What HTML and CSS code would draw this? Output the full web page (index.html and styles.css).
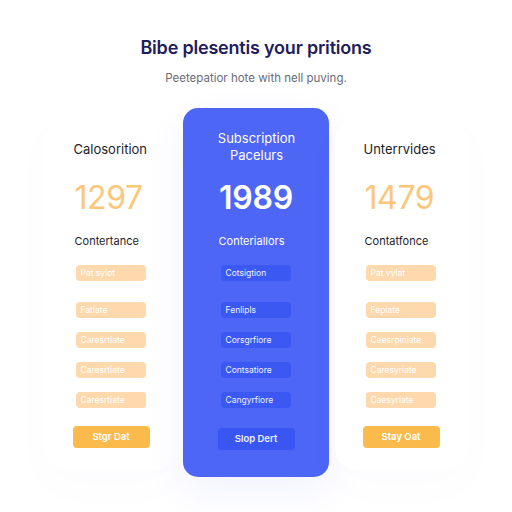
FILE: index.html
```html
<!DOCTYPE html>
<html>
<head>
<meta charset="utf-8">
<link rel="stylesheet" href="styles.css">
</head>
<body>
<div class="page">
  <h1 class="title">Bibe plesentis your pritions</h1>
  <p class="subtitle">Peetepatior hote with nell puving.</p>
  <div class="plans">
    <div class="plan side">
      <div class="inner">
        <div class="head">Calosorition</div>
        <div class="num">1297</div>
        <div class="label">Contertance</div>
        <div class="pill first">Pat sylot</div>
        <div class="pill">Fatlate</div>
        <div class="pill">Caresrtiate</div>
        <div class="pill">Caresrtiate</div>
        <div class="pill">Caresrtiate</div>
        <div class="btn">Stgr Dat</div>
      </div>
    </div>
    <div class="plan main">
      <div class="inner">
        <div class="head">Subscription<br>Pacelurs</div>
        <div class="num">1989</div>
        <div class="label">Conteriallors</div>
        <div class="pill first">Cotsigtion</div>
        <div class="pill">Fenlipls</div>
        <div class="pill">Corsgrfiore</div>
        <div class="pill">Contsatiore</div>
        <div class="pill">Cangyrfiore</div>
        <div class="btn">Slop Dert</div>
      </div>
    </div>
    <div class="plan side">
      <div class="inner">
        <div class="head">Unterrvides</div>
        <div class="num">1479</div>
        <div class="label">Contatfonce</div>
        <div class="pill first">Pat vylat</div>
        <div class="pill">Fepiate</div>
        <div class="pill">Ceesrpiniate</div>
        <div class="pill">Caresyriate</div>
        <div class="pill">Caesyriate</div>
        <div class="btn">Stay Oat</div>
      </div>
    </div>
  </div>
</div>
</body>
</html>
```

FILE: styles.css
```css
* { box-sizing: border-box; margin: 0; padding: 0; }
html, body { width: 512px; height: 512px; background: #ffffff; overflow: hidden; }
body { font-family: Inter, "Open Sans", sans-serif; }

.page { display: flex; flex-direction: column; align-items: center; padding-top: 37px; }

.title {
  font-size: 18px; font-weight: 600; color: #1f1c5c; line-height: 22px;
  letter-spacing: -0.2px;
}
.subtitle {
  margin-top: 12px; font-size: 11.5px; color: #6b6b78; line-height: 14px;
}

.plans {
  margin-top: 23px;
  display: grid;
  grid-template-columns: 132px 146px 132px;
  column-gap: 6px;
  align-items: stretch;
}

.plan { display: flex; flex-direction: column; align-items: center; }
.plan .inner { display: flex; flex-direction: column; width: 77px; }

.side {
  margin: 10px 0 7px;
  padding-top: 11px;
  background: #ffffff;
  border-radius: 22px;
  box-shadow: 0 14px 40px rgba(110, 120, 200, 0.025);
}
.main {
  padding-top: 21px; padding-bottom: 27px;
  background: #4e66f6;
  border-radius: 15px;
  box-shadow: 0 16px 40px rgba(70, 90, 230, 0.07);
}

.head {
  height: 35px; display: flex; align-items: center;
  font-size: 13px; color: #1d1d2b; line-height: 17px; padding: 6px 0 0 1px;
}
.main .head { justify-content: center; text-align: center; color: #ffffff; padding: 0; width: 146px; margin-left: -34px; }

.num {
  margin-top: 16px; height: 36px; line-height: 36px;
  font-size: 32px; font-weight: 400; color: #fcc77a; padding-left: 2px; letter-spacing: -0.4px;
}
.main .num { color: #ffffff; font-weight: 600; text-align: center; padding-left: 0; font-size: 32px; letter-spacing: -0.2px; }

.label {
  margin-top: 18px; height: 14px; line-height: 14px;
  font-size: 11px; color: #1d1d2b; padding-left: 2px;
}
.main .label { color: #ffffff; text-align: left; padding-left: 1px; }

.pill {
  margin: 14px 0 0 3px; width: 70px; height: 16px; line-height: 16px;
  border-radius: 4px; background: #fdd9ad; color: #ffffff;
  font-size: 8.5px; padding-left: 5px; white-space: nowrap; overflow: hidden;
}
.pill.first { margin-top: 17px; }
.pill.first + .pill { margin-top: 21px; }
.main .pill { background: #3b58f3; color: #eef0ff; }

.btn {
  margin-top: 18px; width: 77px; height: 22px; line-height: 22px;
  border-radius: 4px; background: #fbbb4c; color: #ffffff;
  font-size: 9.5px; font-weight: 600; text-align: center;
}
.main .btn { background: #3a56f2; margin-top: 20px; color: #eef0ff; }
```
